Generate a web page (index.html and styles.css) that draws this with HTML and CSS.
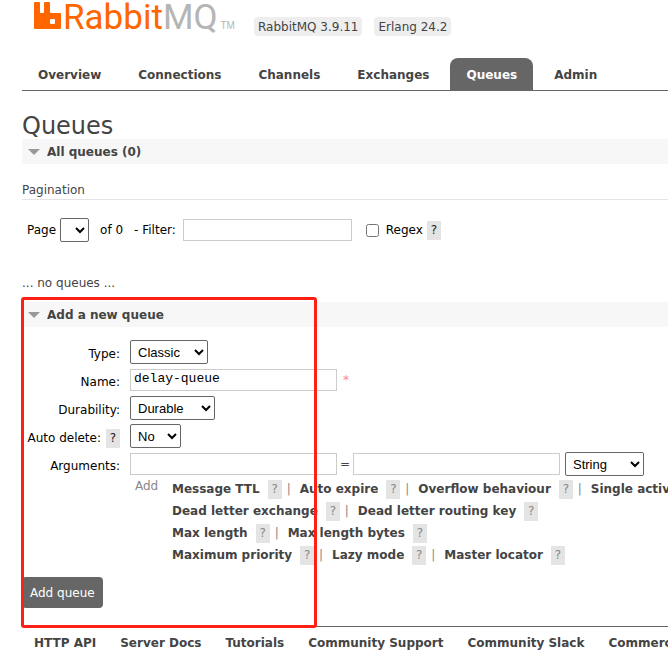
FILE: index.html
```html
<!DOCTYPE html>
<html lang="en">
<head>
<meta charset="utf-8">
<title>RabbitMQ Management</title>
<link rel="stylesheet" href="styles.css">
</head>
<body>
<header class="header">
  <a class="logo" href="#">
    <svg class="logo-mark" viewBox="0 0 27 27" aria-hidden="true"><path fill="#f60" fill-rule="evenodd" d="M1 0H5Q6 0 6 1V10Q6 11 7 11H9Q10 11 10 10V1Q10 0 11 0H15Q16 0 16 1V10Q16 11 17 11H26Q27 11 27 12V26Q27 27 26 27H1Q0 27 0 26V1Q0 0 1 0ZM17 17Q16 17 16 18V21Q16 22 17 22H20Q21 22 21 21V18Q21 17 20 17Z"/></svg>
    <span class="logo-text">Rabbit<span class="logo-mq">MQ</span></span><span class="logo-tm">TM</span>
  </a>
  <div class="versions"><span class="version">RabbitMQ 3.9.11</span><span class="version">Erlang 24.2</span></div>
</header>
<nav class="tabs">
  <a href="#">Overview</a><a href="#">Connections</a><a href="#">Channels</a><a href="#">Exchanges</a><a class="selected" href="#">Queues</a><a href="#">Admin</a>
</nav>
<main>
  <h1>Queues</h1>
  <section>
    <h2>All queues (0)</h2>
    <h3>Pagination</h3>
    <div class="filter">
      <label for="page">Page</label>
      <select id="page" class="page-select"></select>
      <span class="page-count">of 0</span>
      <label for="filter">- Filter:</label>
      <input id="filter" class="filter-input" type="text">
      <input id="regex" class="regex-box" type="checkbox">
      <label for="regex">Regex</label>
      <button class="help" type="button">?</button>
    </div>
    <p class="empty">... no queues ...</p>
  </section>
  <section class="add">
    <h2>Add a new queue</h2>
    <form>
      <div class="fields">
        <label for="type">Type:</label>
        <div class="field"><select id="type" class="type-select"><option>Classic</option></select></div>
        <label for="name">Name:</label>
        <div class="field"><input id="name" class="text" type="text" value="delay-queue"><span class="required">*</span></div>
        <label for="durability">Durability:</label>
        <div class="field"><select id="durability" class="durability-select"><option>Durable</option></select></div>
        <div class="label-help"><label for="autodelete">Auto delete:</label><button class="help" type="button">?</button></div>
        <div class="field"><select id="autodelete" class="auto-select"><option>No</option></select></div>
        <label for="argkey">Arguments:</label>
        <div class="field"><input id="argkey" class="text" type="text"><span class="equals">=</span><input class="text" type="text" aria-label="Argument value"><select class="arg-select" aria-label="Argument type"><option>String</option></select></div>
      </div>
      <div class="presets">
        <span class="presets-title">Add</span>
        <div class="preset-rows">
          <div class="preset-row"><a href="#">Message TTL</a><button class="help" type="button">?</button><i>|</i><a href="#">Auto expire</a><button class="help" type="button">?</button><i>|</i><a href="#">Overflow behaviour</a><button class="help" type="button">?</button><i>|</i><a href="#">Single active consumer</a></div>
          <div class="preset-row"><a href="#">Dead letter exchange</a><button class="help" type="button">?</button><i>|</i><a href="#">Dead letter routing key</a><button class="help" type="button">?</button></div>
          <div class="preset-row"><a href="#">Max length</a><button class="help" type="button">?</button><i>|</i><a href="#">Max length bytes</a><button class="help" type="button">?</button></div>
          <div class="preset-row"><a href="#">Maximum priority</a><button class="help" type="button">?</button><i>|</i><a href="#">Lazy mode</a><button class="help" type="button">?</button><i>|</i><a href="#">Master locator</a><button class="help" type="button">?</button></div>
        </div>
      </div>
      <button class="submit" type="submit">Add queue</button>
    </form>
    <div class="highlight"></div>
  </section>
</main>
<footer class="footer">
  <a href="#">HTTP API</a><a href="#">Server Docs</a><a href="#">Tutorials</a><a href="#">Community Support</a><a href="#">Community Slack</a><a href="#">Commercial Support</a>
</footer>
</body>
</html>
```
FILE: styles.css
```css
* { box-sizing: border-box; }

body {
  margin: 0;
  padding-left: 22px;
  overflow: hidden;
  background: #fff;
  color: #444;
  font: 12px/16px Verdana, "DejaVu Sans", sans-serif;
  white-space: nowrap;
}

a { color: #444; font-weight: bold; text-decoration: none; }
h1, h2, h3, p { margin: 0; }

.header { display: flex; height: 58px; padding-left: 12px; }
.logo { display: flex; flex: none; align-items: flex-start; width: 220px; font-weight: normal; }
.logo-mark { flex: none; width: 27px; height: 27px; margin-top: 2px; }
.logo-text {
  margin-left: 2px;
  color: #f60;
  font: 35px/36px Roboto, sans-serif;
}
.logo-mq { color: #b5b5b5; }
.logo-tm {
  margin: 18px 0 0 3px;
  color: #b5b5b5;
  font: 10px/16px "Liberation Sans", sans-serif;
}
.versions { display: flex; gap: 12px; padding-top: 17px; }
.version { height: 19px; padding: 2px 4px; border-radius: 4px; background: #eee; }

.tabs { display: flex; gap: 5px; border-bottom: 1px solid #666; }
.tabs a { padding: 9px 16px 7px; border-radius: 8px 8px 0 0; }
.tabs .selected { background: #666; color: #fff; }

h1 { padding-top: 22px; font-size: 24px; font-weight: normal; line-height: 26px; }
h2 {
  display: flex;
  align-items: center;
  gap: 7px;
  height: 25px;
  padding-left: 6px;
  background: #f7f7f7;
  font-size: 12px;
}
h2::before {
  content: "";
  border: solid transparent;
  border-width: 6px 6px 0;
  border-top-color: #999;
}
h3 {
  padding: 18px 0 1px;
  border-bottom: 1px solid #e4e4e4;
  font-size: 12px;
  font-weight: normal;
}

label { color: #000; }
select, input { margin: 0; color: #000; }
select {
  height: 24px;
  padding: 0 3px;
  border: 1px solid #666;
  border-radius: 2px;
  background: #fff;
  font: 13px "Liberation Sans", Arial, sans-serif;
}
input[type="text"] {
  height: 22px;
  padding: 0 3px 3px;
  border: 1px solid #ccc;
  font: 13px "Liberation Mono", "Courier New", monospace;
}
.help {
  width: 14px;
  height: 19px;
  padding: 0;
  border: 0;
  background: #e4e4e4;
  color: #222;
  font: inherit;
}

.filter { display: flex; align-items: center; height: 60px; padding-left: 5px; }
.page-select { width: 29px; margin: 0 11px 0 4px; }
.page-count { margin-right: 11px; color: #000; }
.filter-input { width: 169px; margin-left: 7px; }
.regex-box { width: 13px; height: 13px; margin: 0 7px 0 14px; }
.filter .help { margin-left: 4px; }
.empty { padding: 15px 0 11px; }

.add { position: relative; height: 324px; }
.fields {
  display: grid;
  grid-template-columns: 98px 1fr;
  grid-auto-rows: 24px;
  gap: 4px 10px;
  padding-top: 13px;
  align-items: center;
}
.fields label { padding-top: 4px; text-align: right; }
.label-help { display: flex; justify-content: flex-end; align-items: center; gap: 5px; padding-top: 4px; }
.fields .label-help label { padding-top: 0; }
.field { display: flex; align-items: center; }
.text { width: 207px; }
.type-select { width: 78px; }
.durability-select { width: 85px; }
.auto-select { width: 51px; }
.arg-select { width: 79px; margin-left: 5px; }
.required { margin-left: 6px; color: #f88; }
.equals { width: 16px; text-align: center; }

.presets { display: flex; padding: 2px 0 0 113px; color: #888; }
.presets-title { flex: none; width: 37px; }
.preset-row { display: flex; align-items: center; height: 22px; }
.preset-row .help { flex: none; margin-left: 8px; color: #888; }
.preset-row i { flex: none; width: 18px; padding-left: 5px; font-style: normal; }

.submit {
  height: 31px;
  margin-top: 11px;
  padding: 0 8px;
  border: 0;
  border-radius: 4px;
  background: #666;
  color: #fff;
  font: inherit;
}
.highlight {
  position: absolute;
  top: -5px;
  bottom: -2px;
  left: -1px;
  width: 296px;
  border: 3px solid #ff2015;
  border-radius: 3px;
  pointer-events: none;
}

.footer { display: flex; gap: 24px; padding: 8px 0 0 12px; border-top: 1px solid #666; }
```
